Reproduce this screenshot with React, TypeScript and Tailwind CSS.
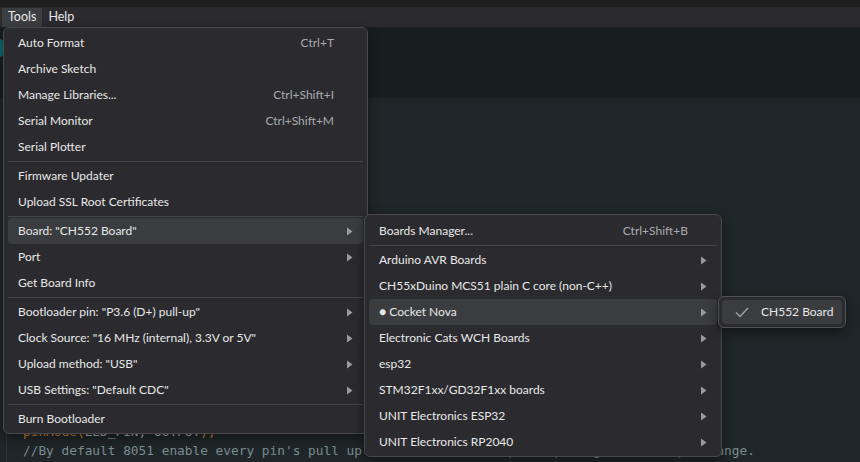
import React from 'react';

type Item =
  | { sep: true }
  | { sep?: false; label: string; shortcut?: string; sub?: boolean; active?: boolean };

const MAIN: Item[] = [
  { label: 'Auto Format', shortcut: 'Ctrl+T' },
  { label: 'Archive Sketch' },
  { label: 'Manage Libraries...', shortcut: 'Ctrl+Shift+I' },
  { label: 'Serial Monitor', shortcut: 'Ctrl+Shift+M' },
  { label: 'Serial Plotter' },
  { sep: true },
  { label: 'Firmware Updater' },
  { label: 'Upload SSL Root Certificates' },
  { sep: true },
  { label: 'Board: "CH552 Board"', sub: true, active: true },
  { label: 'Port', sub: true },
  { label: 'Get Board Info' },
  { sep: true },
  { label: 'Bootloader pin: "P3.6 (D+) pull-up"', sub: true },
  { label: 'Clock Source: "16 MHz (internal), 3.3V or 5V"', sub: true },
  { label: 'Upload method: "USB"', sub: true },
  { label: 'USB Settings: "Default CDC"', sub: true },
  { sep: true },
  { label: 'Burn Bootloader' },
];

const BOARDS: Item[] = [
  { label: 'Boards Manager...', shortcut: 'Ctrl+Shift+B' },
  { sep: true },
  { label: 'Arduino AVR Boards', sub: true },
  { label: 'CH55xDuino MCS51 plain C core (non-C++)', sub: true },
  { label: '● Cocket Nova', sub: true, active: true },
  { label: 'Electronic Cats WCH Boards', sub: true },
  { label: 'esp32', sub: true },
  { label: 'STM32F1xx/GD32F1xx boards', sub: true },
  { label: 'UNIT Electronics ESP32', sub: true },
  { label: 'UNIT Electronics RP2040', sub: true },
];

function Arrow() {
  return (
    <svg width="7" height="9" viewBox="0 0 7 9" className="shrink-0">
      <path d="M1 0.5 L6.5 4.5 L1 8.5 Z" fill="#9a9b9e" />
    </svg>
  );
}

function MenuList({ items }: { items: Item[] }) {
  return (
    <>
      {items.map((it, i) =>
        it.sep ? (
          <div key={i} className="h-[3px] flex items-center px-[4px]">
            <div className="h-px w-full bg-[#44454a]" />
          </div>
        ) : (
          <div
            key={i}
            className={`h-[26px] mx-[4px] pl-[10px] pr-[10px] flex items-center rounded-[4px] ${
              it.active ? 'bg-[#3b3c40]' : ''
            }`}
          >
            <span className="flex-1 text-[#e8e8e8] whitespace-nowrap">{it.label}</span>
            {it.shortcut && <span className="text-[#a9aaad] mr-[19px] whitespace-nowrap">{it.shortcut}</span>}
            {it.sub && <Arrow />}
          </div>
        ),
      )}
    </>
  );
}

export default function App() {
  return (
    <div
      className="relative w-[860px] h-[462px] overflow-hidden bg-[#1f2629] text-[12px] flex flex-col"
      style={{ fontFamily: '"Segoe UI", Lato, "Noto Sans", sans-serif' }}
    >
      {/* top strip + menubar */}
      <div className="h-[7px] bg-[#1f1f1f]" />
      <div className="h-[20px] bg-[#2b2b2f] flex items-center text-[#e8e8e8] text-[12.5px]">
        <div className="ml-[2px] h-[19px] px-[6px] flex items-center bg-[#3d3e42]">Tools</div>
        <div className="px-[6px] flex items-center">Help</div>
      </div>
      {/* toolbar area */}
      <div className="h-[71px] bg-[#181e20] flex items-start pt-[12px]">
        <div className="ml-[-6px] w-[10px] h-[18px] rounded-full bg-[#0f6b6f]" />
      </div>

      {/* editor */}
      <div className="flex-1 flex" style={{ fontFamily: '"DejaVu Sans Mono", monospace' }}>
        <div className="w-[7px] flex flex-col justify-end">
          <div className="h-[30px] border-r border-[#2c3437]" />
        </div>
        <div className="flex-1 flex flex-col justify-end pl-[16px] pb-[2px] text-[12.8px] leading-[19px] whitespace-pre">
          <div className="text-[#d7822b]">
            pinMode(<span className="text-[#a9b4b6]">LED_PIN, OUTPUT</span>);
          </div>
          <div className="text-[#7a8c8e]">
            //By default 8051 enable every pin's pull up resistor. Disable pull-up to get full input range.
          </div>
        </div>
      </div>

      {/* Tools menu */}
      <div className="absolute left-[3px] top-[27px] w-[365px] pt-[2px] pb-px bg-[#2b2b2f] border border-[#48494d] rounded-[6px] shadow-[0_4px_12px_rgba(0,0,0,0.45)]">
        <MenuList items={MAIN} />
      </div>

      {/* Board submenu */}
      <div className="absolute left-[364px] top-[214px] w-[358px] pt-[3px] pb-[1px] bg-[#2b2b2f] border border-[#48494d] rounded-[6px] shadow-[0_4px_12px_rgba(0,0,0,0.45)]">
        <MenuList items={BOARDS} />
      </div>

      {/* Cocket Nova submenu */}
      <div className="absolute left-[718px] top-[296px] w-[128px] p-[3px] bg-[#2b2b2f] border border-[#505155] rounded-[6px] shadow-[0_4px_12px_rgba(0,0,0,0.45)]">
        <div className="h-[24px] rounded-[4px] bg-[#3b3c40] flex items-center pl-[13px]">
          <svg width="14" height="11" viewBox="0 0 14 11">
            <path d="M1 5.5 L5 9.5 L13 1" fill="none" stroke="#a0a1a4" strokeWidth="1.4" />
          </svg>
          <span className="ml-[12px] text-[#e8e8e8]">CH552 Board</span>
        </div>
      </div>
    </div>
  );
}
